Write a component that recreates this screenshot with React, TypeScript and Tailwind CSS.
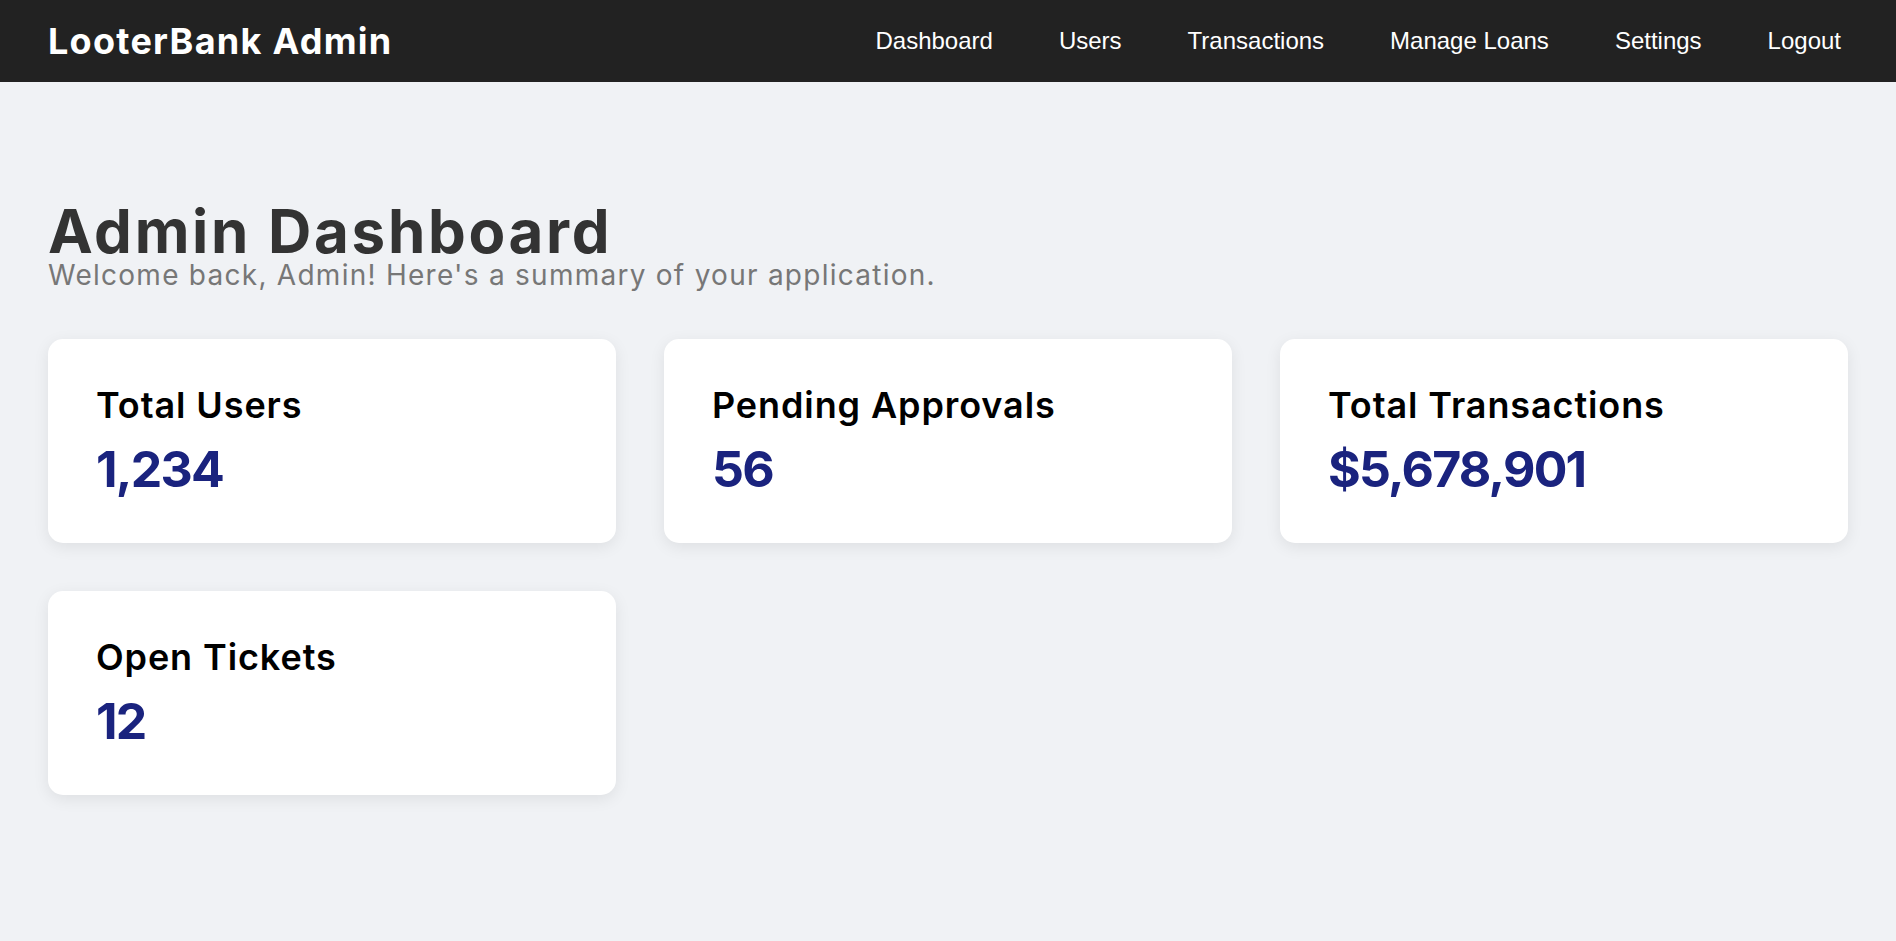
import React from "react";

const cards = [
  { title: "Total Users", value: "1,234" },
  { title: "Pending Approvals", value: "56" },
  { title: "Total Transactions", value: "$5,678,901" },
  { title: "Open Tickets", value: "12" },
];

const links = ["Dashboard", "Users", "Transactions", "Manage Loans", "Settings", "Logout"];

export default function App() {
  return (
    <div className="min-h-screen bg-[#f0f2f5] font-['Inter','Open_Sans',sans-serif]">
      <nav className="h-[82px] bg-[#222222] flex items-center justify-between pl-12 pr-[55px]">
        <div className="text-white font-bold text-[36px] tracking-[0.035em] leading-normal">LooterBank Admin</div>
        <div className="flex items-center gap-[66px] font-['Liberation_Sans','Arial',sans-serif] text-[24px] text-white leading-normal">
          {links.map((l) => (
            <a key={l} href="#" className="text-white">
              {l}
            </a>
          ))}
        </div>
      </nav>
      <main className="px-12 pt-[119px] pb-12">
        <h1 className="text-[60px] leading-[60px] font-bold text-[#333333] tracking-[0.045em]">Admin Dashboard</h1>
        <p className="text-[28px] leading-[28px] text-[#777777] tracking-[0.045em]">
          Welcome back, Admin! Here's a summary of your application.
        </p>
        <div className="mt-[50px] grid grid-cols-3 gap-12">
          {cards.map((c) => (
            <div
              key={c.title}
              className="bg-white rounded-[15px] shadow-[0_4px_16px_rgba(0,0,0,0.08)] px-12 pt-[46px] pb-[48px] h-[204px]"
            >
              <div className="text-[36px] leading-[40px] font-semibold text-black tracking-[0.025em]">{c.title}</div>
              <div className="mt-[19px] text-[50px] leading-[50px] font-bold text-[#1a237e] tracking-[-0.035em]">{c.value}</div>
            </div>
          ))}
        </div>
      </main>
    </div>
  );
}
